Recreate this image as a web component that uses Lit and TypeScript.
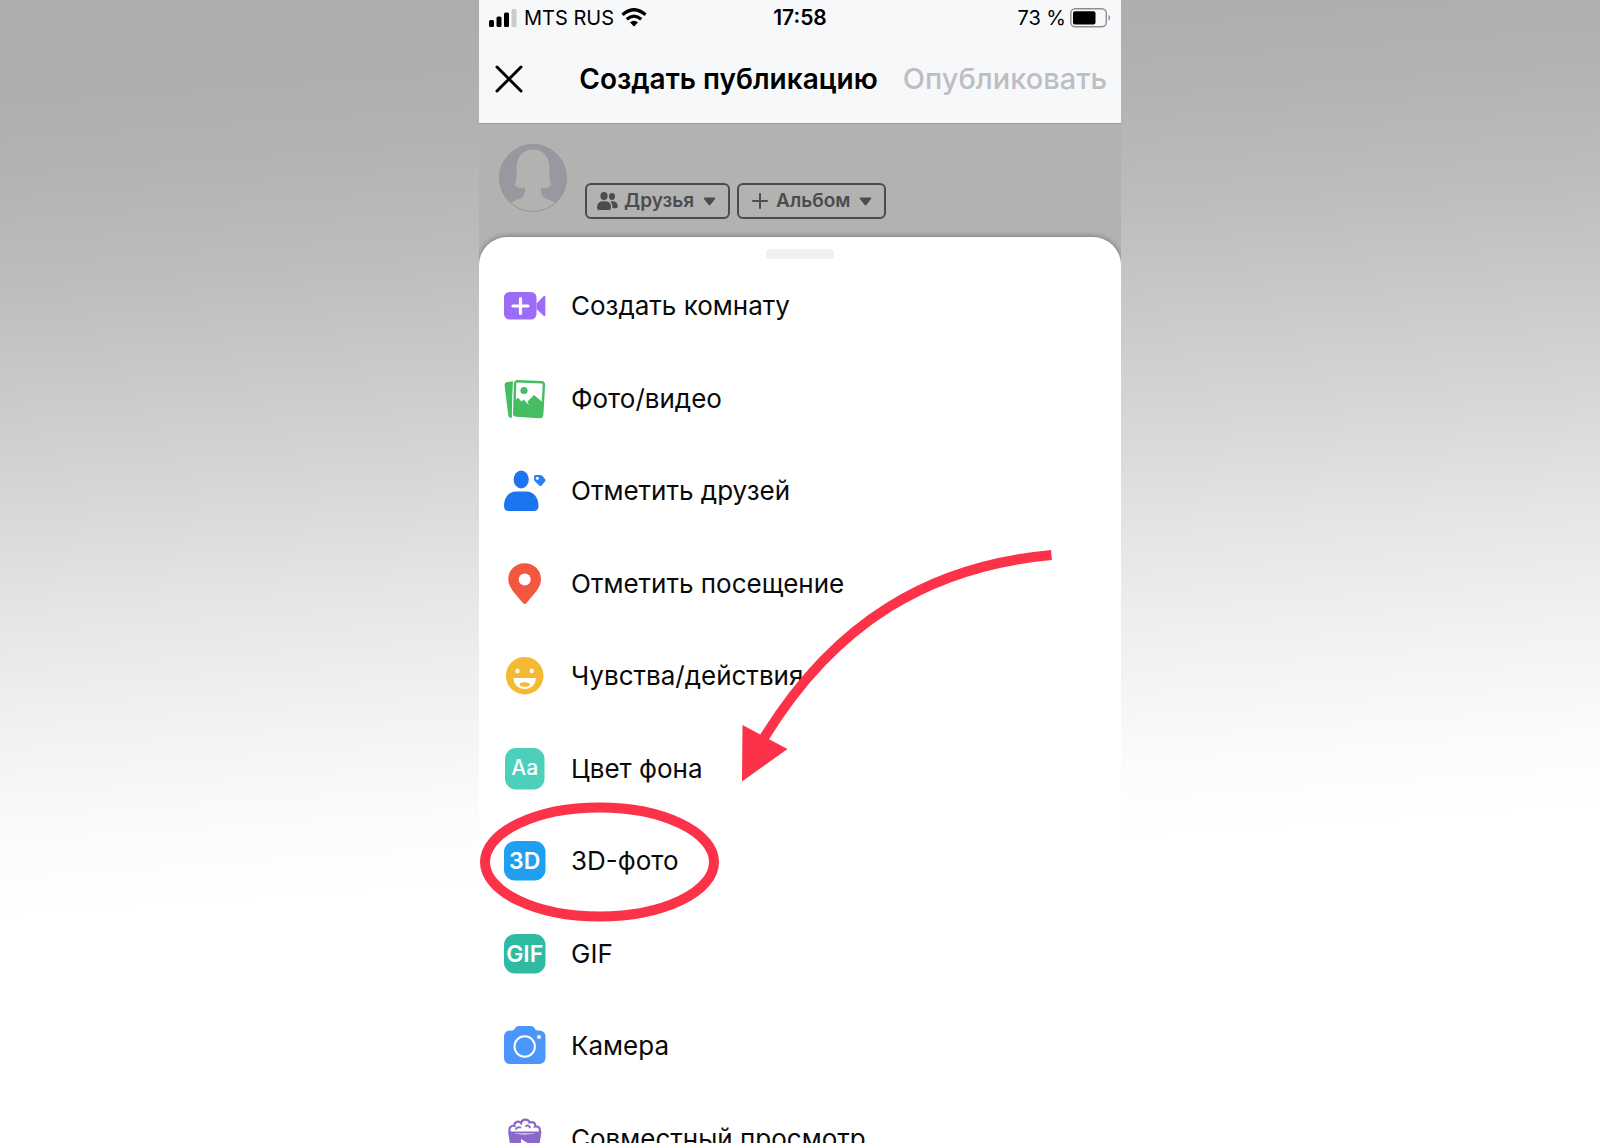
import { LitElement, html, css, svg, SVGTemplateResult } from "lit";
import { customElement, property } from "lit/decorators.js";

interface MenuItem {
  label: string;
  icon: SVGTemplateResult;
  mark?: boolean;
}

const roomIcon = svg`
  <rect x="1" y="8" width="32.500" height="27.500" rx="5.500" fill="#9c6cf6"/>
  <path d="M33.500 19.500 L40.500 12.200 Q42.300 11 42.300 13.200 V31 Q42.300 33 40.500 31.800 L33.500 25 Z" fill="#9c6cf6"/>
  <path d="M17.500 14.500 V29.500 M10 22 H25" stroke="#fff" stroke-width="3.200" stroke-linecap="round"/>`;

const photoIcon = svg`
  <path d="M4 5 L10 4.300 Q8.700 22 9 40.700 L7.500 40.800 Q5.500 40.800 5.200 38 L1.600 8.500 Q1.400 5.500 4 5 Z" fill="#45bd62"/>
  <path d="M14.500 4.300 L38.500 5.300 Q41 5.500 40.900 8 L39.200 37.500 Q39 40.300 36.300 40.100 L13.500 38.600 Q11 38.400 11.200 35.500 L12.100 6.800 Q12.200 4.200 14.500 4.300 Z" fill="#fff" stroke="#45bd62" stroke-width="2.400"/>
  <path d="M11.600 23.500 L15 20.800 L18.500 24.500 L20.500 22.500 L26 28 L24.500 24.500 L31 18 L40 25.500 L39.200 38 Q39 40.300 36.300 40.100 L13.500 38.600 Q11 38.400 11.200 35.500 Z" fill="#45bd62"/>
  <circle cx="21" cy="13.500" r="3.600" fill="#45bd62"/>`;

const friendsIcon = svg`
  <ellipse cx="18.200" cy="10.500" rx="7.600" ry="9" fill="#1b74f0"/>
  <path d="M13 22.500 H23.500 C31 22.500 35.500 29 35.500 37 Q35.500 42 31 42 H5.500 Q1 42 1 37 C1 29 5.500 22.500 13 22.500 Z" fill="#1b74f0"/>
  <path d="M32.500 6 L37.500 6 Q39 6 40 7.500 L42.300 10.600 Q42.800 11.500 42 12.400 L38.600 16.500 Q37.500 17.500 36.300 16.500 L32 12.500 Q31 11.500 31 10 V7.500 Q31 6 32.500 6 Z" fill="#2b7ff2"/>
  <circle cx="34.300" cy="9.300" r="1.500" fill="#fff"/>`;

const pinIcon = svg`
  <path d="M21.700 1.200 C31 1.200 38 8 38 17.200 C38 25.500 31 32 23.200 41.200 Q21.700 42.800 20.200 41.200 C12.500 32 5.300 25.500 5.300 17.200 C5.300 8 12.500 1.200 21.700 1.200 Z" fill="#f3573f"/>
  <circle cx="21.700" cy="17.600" r="6" fill="#fff"/>`;

const feelingIcon = svg`
  <circle cx="21.700" cy="21.700" r="18.800" fill="#f5ba33"/>
  <circle cx="14.500" cy="17" r="2.200" fill="#fff"/>
  <circle cx="28.800" cy="17" r="2.200" fill="#fff"/>
  <path d="M10.500 24 H33 C32.500 31 28 35 21.700 35 C15.500 35 11 31 10.500 24 Z" fill="#fff"/>
  <ellipse cx="21.700" cy="30.500" rx="5" ry="2.300" fill="#f5ba33"/>`;

const backgroundIcon = svg`
  <rect x="2" y="1" width="39.500" height="41.500" rx="11" fill="#4cd0bb"/>
  <text x="21.700" y="28" font-size="21" font-weight="500" text-anchor="middle" fill="#fff">Aa</text>`;

const threeDIcon = svg`
  <rect x="1" y="2" width="41.500" height="39.500" rx="11" fill="#1e9ff0"/>
  <text x="21.700" y="30" font-size="23" font-weight="600" text-anchor="middle" fill="#fff">3D</text>`;

const gifIcon = svg`
  <rect x="1" y="2" width="41.500" height="39.500" rx="11" fill="#2fbba2"/>
  <text x="21.700" y="30" font-size="23" font-weight="600" text-anchor="middle" fill="#fff">GIF</text>`;

const cameraIcon = svg`
  <path d="M15.500 2 H28 Q30 2 31.300 3.800 L32.300 5.500 Q33 6.500 34.500 6.500 H36 Q42.500 6.500 42.500 13 V33.500 Q42.500 40 36 40 H7.500 Q1 40 1 33.500 V13 Q1 6.500 7.500 6.500 H9 Q10.500 6.500 11.200 5.500 L12.300 3.800 Q13.500 2 15.500 2 Z" fill="#4a96fa"/>
  <circle cx="21.700" cy="22.500" r="10.200" fill="none" stroke="#fff" stroke-width="2"/>
  <circle cx="36" cy="13" r="2" fill="#fff"/>`;

const watchIcon = svg`
  <path d="M7 15.500 C5 10.500 8.500 8 11.500 9 C11 4.500 16 3.500 18 6 C19 1.500 25.500 1.500 26.500 5.500 C30.500 4 33 6.500 32 9.500 C35.500 8.800 38 11.500 36.500 15.500 Z" fill="#fff" stroke="#8a68c8" stroke-width="2.200"/>
  <path d="M13 12 Q14.500 9.500 17.500 10.500 M23 9 Q25.500 7.500 27 10.500" fill="none" stroke="#8a68c8" stroke-width="1.800" stroke-linecap="round"/>
  <path d="M5 14.500 Q13 17.500 21.700 17.500 Q30 17.500 38.500 14.500 L34.500 40 Q34 43 31 43 H12 Q9.500 43 9 40 Z" fill="#8a68c8"/>
  <path d="M18 22 L27 27.500 L18 33 Z" fill="#fff"/>`;

const items: MenuItem[] = [
  { label: "Создать комнату", icon: roomIcon },
  { label: "Фото/видео", icon: photoIcon },
  { label: "Отметить друзей", icon: friendsIcon },
  { label: "Отметить посещение", icon: pinIcon },
  { label: "Чувства/действия", icon: feelingIcon },
  { label: "Цвет фона", icon: backgroundIcon },
  { label: "3D-фото", icon: threeDIcon, mark: true },
  { label: "GIF", icon: gifIcon },
  { label: "Камера", icon: cameraIcon },
  { label: "Совместный просмотр", icon: watchIcon },
];

const buttonReset = css`
  button {
    margin: 0;
    padding: 0;
    border: 0;
    background: none;
    color: inherit;
    font: inherit;
    cursor: pointer;
  }
  svg {
    display: block;
    flex: none;
  }
`;

@customElement("status-bar")
class StatusBar extends LitElement {
  static styles = css`
    :host {
      display: grid;
      grid-template-columns: 1fr auto 1fr;
      align-items: center;
      height: 35px;
      padding: 0 10px;
      font-size: 20px;
      line-height: 24px;
    }
    svg {
      display: block;
      flex: none;
    }
    .side {
      display: flex;
      align-items: center;
      gap: 7px;
    }
    .end {
      justify-content: flex-end;
      gap: 4px;
    }
    .time {
      font-size: 21px;
      font-weight: 600;
    }
  `;

  render() {
    return html`
      <div class="side">
        <svg width="28" height="18" viewBox="0 0 28 18" aria-hidden="true">
          <rect x="0" y="11" width="5" height="7" rx="1.500" />
          <rect x="7.500" y="7.500" width="5" height="10.500" rx="1.500" />
          <rect x="15" y="3.500" width="5" height="14.500" rx="1.500" />
          <rect x="22.500" y="0" width="5" height="18" rx="1.500" fill="#cbcbce" />
        </svg>
        <span>MTS RUS</span>
        <svg width="26" height="19" viewBox="0 0 26 19" aria-hidden="true">
          <path d="M1.500 6.800 Q13 -3.300 24.500 6.800" fill="none" stroke="#000" stroke-width="3.400" />
          <path d="M5.800 11.300 Q13 5 20.200 11.300" fill="none" stroke="#000" stroke-width="3.200" />
          <path d="M9 14.300 Q13 11 17 14.300 L13.700 17.900 Q13 18.500 12.300 17.900 Z" />
        </svg>
      </div>
      <span class="time">17:58</span>
      <div class="side end">
        <span>73 %</span>
        <svg width="41" height="20" viewBox="0 0 41 20" aria-hidden="true">
          <rect x="0.800" y="0.800" width="35.500" height="18" rx="4.500" fill="none" stroke="#8e8e92" stroke-width="1.400" />
          <rect x="3" y="3.200" width="22.500" height="13.200" rx="2" />
          <path d="M38.500 6.800 Q40.200 8 40.200 9.800 Q40.200 11.600 38.500 12.800 Z" fill="#8e8e92" />
        </svg>
      </div>
    `;
  }
}

@customElement("post-header")
class PostHeader extends LitElement {
  static styles = [
    buttonReset,
    css`
      :host {
        display: flex;
        align-items: center;
        height: 88px;
        padding: 0 14px 0 16px;
        line-height: 34px;
      }
      .title {
        flex: 1;
        margin: 0;
        text-align: right;
        font-size: 28px;
        font-weight: 600;
        white-space: nowrap;
      }
      button.publish {
        margin-left: 25px;
        color: #bdbec3;
        font-size: 29px;
        font-weight: 500;
      }
    `,
  ];

  render() {
    return html`
      <button class="close" aria-label="Закрыть">
        <svg width="28" height="28" viewBox="0 0 28 28">
          <path d="M2 2 L26 26 M26 2 L2 26" stroke="#000" stroke-width="3" stroke-linecap="round" />
        </svg>
      </button>
      <h1 class="title">Создать публикацию</h1>
      <button class="publish" disabled>Опубликовать</button>
    `;
  }
}

@customElement("post-author")
class PostAuthor extends LitElement {
  static styles = [
    buttonReset,
    css`
      :host {
        display: flex;
        align-items: flex-start;
        gap: 17px;
        padding: 19px 19px 18px;
        border-top: 1px solid #98989a;
        background: #b2b2b0;
        color: #4c4c50;
      }
      .chips {
        display: flex;
        gap: 7px;
        padding-top: 40px;
      }
      button.chip {
        display: flex;
        align-items: center;
        gap: 6px;
        height: 36px;
        padding: 0 12px 0 10px;
        border: 2px solid #4c4c50;
        border-radius: 6px;
        font-size: 19px;
        line-height: 24px;
        font-weight: 600;
      }
      .chip span {
        padding-right: 3px;
      }
    `,
  ];

  render() {
    const caret = html`<svg width="13" height="9" viewBox="0 0 13 9" aria-hidden="true">
      <path d="M1.500 0.500 H11.500 Q13 0.700 12 2 L7.500 7.800 Q6.500 8.800 5.500 7.800 L1 2 Q0 0.700 1.500 0.500 Z" fill="#4c4c50" />
    </svg>`;
    return html`
      <svg width="70" height="70" viewBox="0 0 70 70" aria-hidden="true">
        <defs><clipPath id="round"><circle cx="35" cy="35" r="33.500" /></clipPath></defs>
        <circle cx="35" cy="35" r="33.500" fill="#98989f" />
        <g clip-path="url(#round)">
          <path
            d="M35 6.500 C25 6.500 18.500 14 18.500 25 C18.500 34 19 38 16.500 42 C19.500 45 24 45.500 27 45 C27.500 50 26 54 21.500 56 C16 58 12.500 59 10 62 L8 72 H62 L60 62 C57.500 59 54 58 48.500 56 C44 54 42.500 50 43 45 C46 45.500 50.500 45 53.500 42 C51 38 51.500 34 51.500 25 C51.500 14 45 6.500 35 6.500 Z"
            fill="#b2b2b0"
          />
        </g>
        <circle cx="35" cy="35" r="33.500" fill="none" stroke="#95959b" stroke-width="1" />
      </svg>
      <div class="chips">
        <button class="chip">
          <svg width="21" height="18" viewBox="0 0 21 18" fill="#4c4c50" aria-hidden="true">
            <ellipse cx="7" cy="4" rx="3.600" ry="4" />
            <path d="M5 9.300 H9.500 Q14 10 14 15.500 Q14 18 12 18 H2 Q0 18 0 15.500 Q0.200 10 5 9.300 Z" />
            <ellipse cx="15" cy="4.500" rx="3" ry="3.400" />
            <path d="M13.500 9.300 H16.500 Q20.500 10 20.700 14 Q20.700 16.200 19 16.200 H15.600 Q15.800 12 13.500 9.300 Z" />
          </svg>
          <span>Друзья</span>${caret}
        </button>
        <button class="chip">
          <svg width="21" height="16" viewBox="0 0 21 16" aria-hidden="true">
            <path d="M11 1 V15 M4 8 H18" stroke="#4c4c50" stroke-width="2" stroke-linecap="round" />
          </svg>
          <span>Альбом</span>${caret}
        </button>
      </div>
    `;
  }
}

@customElement("menu-row")
class MenuRow extends LitElement {
  static styles = [
    buttonReset,
    css`
      :host {
        display: grid;
        position: relative;
        height: 100%;
      }
      button.row {
        display: flex;
        align-items: center;
        gap: 24px;
        padding: 0 24px;
        text-align: left;
        font-size: 26px;
        line-height: 32px;
        white-space: nowrap;
      }
      .mark {
        position: absolute;
        left: 0;
        top: -13px;
        pointer-events: none;
      }
      text {
        font-family: Inter, "Liberation Sans", sans-serif;
      }
    `,
  ];

  @property({ attribute: false }) item!: MenuItem;

  render() {
    return html`
      <button class="row">
        <svg width="44" height="44" viewBox="0 0 44 44" aria-hidden="true">${this.item.icon}</svg>
        <span>${this.item.label}</span>
      </button>
      ${this.item.mark
        ? html`<svg class="mark" width="240" height="120" viewBox="0 0 240 120" aria-hidden="true">
            <ellipse cx="120.500" cy="60" rx="114.500" ry="54.500" fill="none" stroke="#fb3248" stroke-width="10" />
          </svg>`
        : null}
    `;
  }
}

@customElement("action-sheet")
class ActionSheet extends LitElement {
  static styles = css`
    :host {
      display: block;
      position: relative;
      overflow: hidden;
      border-radius: 28px 28px 0 0;
      background: #fff;
      box-shadow: 0 -1px 5px rgba(0, 0, 0, 0.3);
    }
    .handle {
      width: 68px;
      height: 10px;
      margin: 12px auto 1px;
      border-radius: 4px;
      background: #f1f1f5;
    }
    .list {
      display: grid;
      grid-auto-rows: 1fr;
      min-height: 925px;
      margin: 0;
      padding: 0;
      list-style: none;
    }
    .arrow {
      display: block;
      position: absolute;
      left: 260px;
      top: 309px;
      pointer-events: none;
    }
  `;

  render() {
    return html`
      <div class="handle"></div>
      <ul class="list">
        ${items.map((item) => html`<li><menu-row .item=${item}></menu-row></li>`)}
      </ul>
      <svg class="arrow" width="320" height="240" viewBox="739 546 320 240" aria-hidden="true">
        <path d="M1051.500 555 C930 566 835 622 764 738" fill="none" stroke="#fb3248" stroke-width="10" />
        <path d="M742.500 725 L787.500 749 L742 781.500 Z" fill="#fb3248" />
      </svg>
    `;
  }
}

@customElement("app-root")
class AppRoot extends LitElement {
  static styles = css`
    :host {
      display: flex;
      justify-content: center;
      height: 100vh;
      overflow: hidden;
      background: linear-gradient(
        176deg,
        #adadad 0%,
        #aeaeae 7%,
        #b3b3b3 14%,
        #bdbdbd 23%,
        #c6c6c6 29%,
        #d8d8d8 41%,
        #e5e5e5 49%,
        #f1f1f1 58%,
        #fbfbfb 67%,
        #fff 73%
      );
      color: #0a0a0a;
      font-family: Inter, "Liberation Sans", sans-serif;
    }
    .phone {
      display: flex;
      flex-direction: column;
      width: 100%;
      max-width: 642px;
      overflow: hidden;
      background: #b2b2b0;
    }
    .top {
      background: #f7f8fa;
      color: #000;
    }
    action-sheet {
      flex: 1;
      min-height: 0;
    }
  `;

  render() {
    return html`
      <main class="phone">
        <header class="top">
          <status-bar></status-bar>
          <post-header></post-header>
        </header>
        <post-author></post-author>
        <action-sheet></action-sheet>
      </main>
    `;
  }
}
